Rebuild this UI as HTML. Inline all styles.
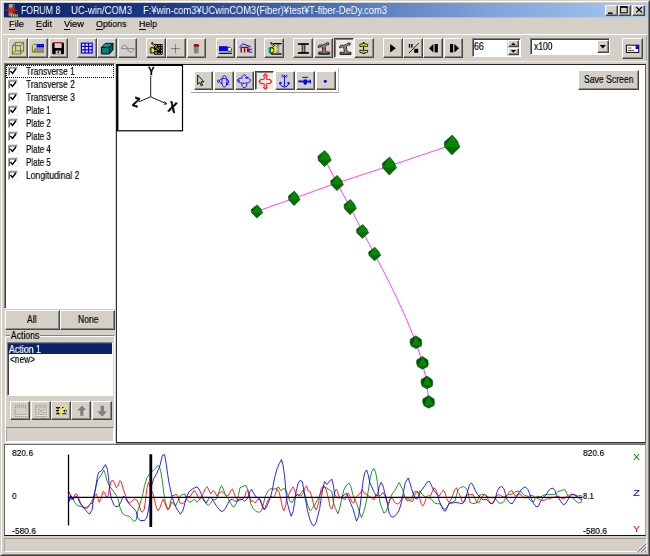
<!DOCTYPE html>
<html>
<head>
<meta charset="utf-8">
<title>FORUM 8 UC-win/COM3</title>
<style>
html,body{margin:0;padding:0;}
body{width:650px;height:556px;overflow:hidden;background:#d4d0c8;position:relative;
 font-family:"Liberation Sans","Noto Sans CJK JP",sans-serif;font-size:10px;color:#000;}
.a{position:absolute;box-sizing:border-box;}
.t{position:absolute;white-space:nowrap;transform-origin:0 0;line-height:1;will-change:transform;-webkit-text-stroke:0.18px currentColor;}
.btn{position:absolute;box-sizing:border-box;background:#d4d0c8;
 border:1px solid;border-color:#fff #484848 #484848 #fff;
 box-shadow:inset -1px -1px 0 #8c8a86;}
.btnp{position:absolute;box-sizing:border-box;
 border:1px solid;border-color:#404040 #fff #fff #404040;
 box-shadow:inset 1px 1px 0 #808080;background:#ebe9e5 repeating-conic-gradient(#fbfbfa 0 25%,#dcd9d2 0 50%) 0 0/1.63px 1.63px;}
.sunk{position:absolute;box-sizing:border-box;background:#fff;
 border:1px solid;border-color:#808080 #fff #fff #808080;
 box-shadow:inset 1px 1px 0 #404040;}
.sunk1{position:absolute;box-sizing:border-box;
 border:1px solid;border-color:#808080 #fff #fff #808080;}
#title{left:4px;top:3px;width:643px;height:14.4px;
 background:linear-gradient(to right,#0a246a 0%,#1c3a86 25%,#4b6fb4 50%,#7da2d8 75%,#a6caf0 100%);}
u{text-decoration:none;border-bottom:1px solid currentColor;}
#ov{position:absolute;left:0;top:0;width:650px;height:556px;pointer-events:none;}
</style>
</head>
<body>
<!-- window frame -->
<div class="a" style="left:0;top:0;width:650px;height:556px;border:1px solid;border-color:#d4d0c8 #404040 #404040 #d4d0c8;"></div>
<div class="a" style="left:1px;top:1px;width:648px;height:554px;border:1px solid;border-color:#fff #808080 #808080 #fff;"></div>

<!-- title bar -->
<div id="title" class="a"></div>
<div class="a" style="left:4px;top:17px;width:643px;height:1px;opacity:.4;background:linear-gradient(to right,#0a246a 0%,#1c3a86 25%,#4b6fb4 50%,#7da2d8 75%,#a6caf0 100%);"></div>
<div class="btn" style="left:605px;top:4.5px;width:12.5px;height:11px;"></div>
<div class="btn" style="left:617.6px;top:4.5px;width:13px;height:11px;"></div>
<div class="btn" style="left:632.4px;top:4.5px;width:13px;height:11px;"></div>

<!-- toolbar lines -->
<div class="a" style="left:3px;top:34px;width:644px;height:1px;background:#fff;"></div>
<div class="a" style="left:646px;top:35px;width:1px;height:27px;background:#a8a59d;"></div>
<div class="a" style="left:3px;top:61.4px;width:644px;height:1px;background:#f0eeea;"></div>

<!-- spin edit -->
<div class="sunk" style="left:471.8px;top:38px;width:49px;height:19.4px;"></div>
<div class="a" style="left:507px;top:40px;width:12px;height:16px;background:#d4d0c8;"></div>
<div class="btn" style="left:507.5px;top:40px;width:11.4px;height:7.4px;"></div>
<div class="btn" style="left:507.5px;top:47.6px;width:11.4px;height:7.8px;"></div>
<!-- combo -->
<div class="sunk" style="left:530px;top:38px;width:80px;height:17px;"></div>
<div class="btn" style="left:597px;top:40px;width:11.6px;height:13px;"></div>

<!-- left panel -->
<div class="sunk" style="left:4.2px;top:63.2px;width:111px;height:245.4px;"></div>
<div class="a" style="left:6.2px;top:65px;width:107.6px;height:12.6px;border:1px dotted #000;"></div>
<div class="btn" style="left:5px;top:310.2px;width:54.6px;height:19.6px;"></div>
<div class="btn" style="left:60.4px;top:310.2px;width:54.4px;height:19.6px;"></div>
<!-- groupbox -->
<div class="a" style="left:5px;top:335px;width:110px;height:108px;border:1px solid;border-color:#808080 #fff #fff #fff;"></div>
<div class="a" style="left:6px;top:336px;width:108px;height:106px;border:1px solid;border-color:#fff #d4d0c8 #d4d0c8 #d4d0c8;"></div>
<div class="sunk" style="left:6.6px;top:342.4px;width:106.2px;height:53.4px;"></div>
<div class="a" style="left:8.4px;top:344.4px;width:103.4px;height:9.4px;background:#0a246a;"></div>
<div class="sunk1" style="left:6px;top:427.4px;width:108px;height:14.6px;border-left-color:#a0a0a0;"></div>

<!-- 3D view -->
<div class="a" style="left:116px;top:64px;width:530px;height:379px;background:#fff;border:1px solid;border-color:#202020 #606060 #303030 #303030;"></div>

<!-- wave panel -->
<div class="a" style="left:3.6px;top:444px;width:642.8px;height:92px;background:#fff;border:1px solid;border-color:#6c6c6c #a0a0a0 #101010 #6c6c6c;"></div>
<div class="a" style="left:116px;top:443px;width:530px;height:1px;background:#8a8a8a;"></div>

<!-- status bar -->
<div class="sunk1" style="left:4px;top:538px;width:643px;height:14px;border-color:#9a9890 #fff #fff #a8a6a0;"></div>

<div class="btn" style="left:8px;top:38px;width:19.8px;height:19.8px;"></div>
<div class="btn" style="left:28.3px;top:38px;width:19.8px;height:19.8px;"></div>
<div class="btn" style="left:48.6px;top:38px;width:19.8px;height:19.8px;"></div>
<div class="btn" style="left:77.1px;top:38px;width:19.8px;height:19.8px;"></div>
<div class="btn" style="left:97.3px;top:38px;width:19.8px;height:19.8px;"></div>
<div class="btn" style="left:117.6px;top:38px;width:19.8px;height:19.8px;"></div>
<div class="btn" style="left:146.1px;top:38px;width:19.8px;height:19.8px;"></div>
<div class="btn" style="left:166.4px;top:38px;width:19.8px;height:19.8px;"></div>
<div class="btn" style="left:186.7px;top:38px;width:19.8px;height:19.8px;"></div>
<div class="btn" style="left:215.5px;top:38px;width:19.8px;height:19.8px;"></div>
<div class="btn" style="left:235.8px;top:38px;width:19.8px;height:19.8px;"></div>
<div class="btn" style="left:264.2px;top:38px;width:19.8px;height:19.8px;"></div>
<div class="btn" style="left:293.2px;top:38px;width:19.8px;height:19.8px;"></div>
<div class="btn" style="left:313.5px;top:38px;width:19.8px;height:19.8px;"></div>
<div class="btnp" style="left:333.9px;top:38px;width:19.8px;height:19.8px;"></div>
<div class="btn" style="left:354.4px;top:38px;width:19.8px;height:19.8px;"></div>
<div class="btn" style="left:382.8px;top:38px;width:19.8px;height:19.8px;"></div>
<div class="btn" style="left:403.1px;top:38px;width:19.8px;height:19.8px;"></div>
<div class="btn" style="left:423.3px;top:38px;width:19.8px;height:19.8px;"></div>
<div class="btn" style="left:443.6px;top:38px;width:19.8px;height:19.8px;"></div>
<div class="btn" style="left:622.3px;top:38px;width:20.4px;height:21px;"></div>
<div class="a" style="left:191px;top:68px;width:148px;height:25px;background:#fff;border-right:1px solid #c0c0c0;border-bottom:1px solid #a0a0a0;"></div>
<div class="btn" style="left:193.8px;top:70.8px;width:19.6px;height:19.4px;"></div>
<div class="btn" style="left:214.4px;top:70.8px;width:19.6px;height:19.4px;"></div>
<div class="btn" style="left:234.6px;top:70.8px;width:19.6px;height:19.4px;"></div>
<div class="btnp" style="left:254.6px;top:70.8px;width:19.6px;height:19.4px;"></div>
<div class="btn" style="left:275.4px;top:70.8px;width:19.6px;height:19.4px;"></div>
<div class="btn" style="left:295.6px;top:70.8px;width:19.6px;height:19.4px;"></div>
<div class="btn" style="left:316px;top:70.8px;width:19.6px;height:19.4px;"></div>
<div class="btn" style="left:578.3px;top:70px;width:60.8px;height:19.8px;"></div>
<div class="btn" style="left:10px;top:401px;width:19.8px;height:19px;"></div>
<div class="btn" style="left:31px;top:401px;width:19.8px;height:19px;"></div>
<div class="btn" style="left:51.3px;top:401px;width:19.8px;height:19px;"></div>
<div class="btn" style="left:71.3px;top:401px;width:19.8px;height:19px;"></div>
<div class="btn" style="left:92.1px;top:401px;width:19.8px;height:19px;"></div>
<div class="t" style="left:20.8px;top:6.0px;font-size:10px;color:#fff;transform:scaleX(0.873);-webkit-text-stroke:0;">FORUM 8</div>
<div class="t" style="left:70.8px;top:6.0px;font-size:10px;color:#fff;transform:scaleX(0.946);-webkit-text-stroke:0;">UC-win/COM3</div>
<div class="t" style="left:142.5px;top:6.0px;font-size:10px;color:#fff;transform:scaleX(0.935);-webkit-text-stroke:0;">F:¥win-com3¥UCwinCOM3(Fiber)¥test¥T-fiber-DeDy.com3</div>
<div class="t" style="left:9.3px;top:20.0px;font-size:9px;color:#000;transform:scaleX(1.033);"><u>F</u>ile</div>
<div class="t" style="left:36.3px;top:20.0px;font-size:9px;color:#000;transform:scaleX(1.030);"><u>E</u>dit</div>
<div class="t" style="left:64.0px;top:20.0px;font-size:9px;color:#000;transform:scaleX(1.033);"><u>V</u>iew</div>
<div class="t" style="left:96.0px;top:20.0px;font-size:9px;color:#000;transform:scaleX(0.982);"><u>O</u>ptions</div>
<div class="t" style="left:139.3px;top:20.0px;font-size:9px;color:#000;transform:scaleX(0.972);"><u>H</u>elp</div>
<div class="t" style="left:25.6px;top:67.0px;font-size:10px;color:#000;transform:scaleX(0.842);">Transverse 1</div>
<div class="t" style="left:25.6px;top:80.0px;font-size:10px;color:#000;transform:scaleX(0.842);">Transverse 2</div>
<div class="t" style="left:25.6px;top:93.0px;font-size:10px;color:#000;transform:scaleX(0.842);">Transverse 3</div>
<div class="t" style="left:25.6px;top:106.0px;font-size:10px;color:#000;transform:scaleX(0.796);">Plate 1</div>
<div class="t" style="left:25.6px;top:119.0px;font-size:10px;color:#000;transform:scaleX(0.796);">Plate 2</div>
<div class="t" style="left:25.6px;top:132.0px;font-size:10px;color:#000;transform:scaleX(0.796);">Plate 3</div>
<div class="t" style="left:25.6px;top:145.0px;font-size:10px;color:#000;transform:scaleX(0.796);">Plate 4</div>
<div class="t" style="left:25.6px;top:158.0px;font-size:10px;color:#000;transform:scaleX(0.796);">Plate 5</div>
<div class="t" style="left:25.6px;top:171.0px;font-size:10px;color:#000;transform:scaleX(0.857);">Longitudinal 2</div>
<div class="t" style="left:27.0px;top:315.0px;font-size:10px;color:#000;transform:scaleX(0.854);">All</div>
<div class="t" style="left:77.6px;top:315.0px;font-size:10px;color:#000;transform:scaleX(0.858);">None</div>
<div class="t" style="left:11.0px;top:331.0px;font-size:10px;color:#000;transform:scaleX(0.869);background:#d4d0c8;padding:0 1px;margin-left:-1px;">Actions</div>
<div class="t" style="left:9.0px;top:345.0px;font-size:10px;color:#fff;transform:scaleX(0.885);">Action 1</div>
<div class="t" style="left:10.0px;top:355.0px;font-size:10px;color:#000;transform:scaleX(0.832);">&lt;new&gt;</div>
<div class="t" style="left:583.5px;top:75.0px;font-size:10px;color:#000;transform:scaleX(0.864);">Save Screen</div>
<div class="t" style="left:474.3px;top:42.0px;font-size:10px;color:#000;transform:scaleX(0.881);">66</div>
<div class="t" style="left:533.8px;top:42.0px;font-size:10px;color:#000;transform:scaleX(0.853);">x100</div>
<div class="t" style="left:12.0px;top:448.0px;font-size:9.5px;color:#000;transform:scaleX(0.891);">820.6</div>
<div class="t" style="left:12.0px;top:491.0px;font-size:9.5px;color:#000;transform:scaleX(0.868);">0</div>
<div class="t" style="left:12.0px;top:526.0px;font-size:9.5px;color:#000;transform:scaleX(0.891);">-580.6</div>
<div class="t" style="left:582.7px;top:448.0px;font-size:9.5px;color:#000;transform:scaleX(0.891);">820.6</div>
<div class="t" style="left:583.0px;top:491.0px;font-size:9.5px;color:#000;transform:scaleX(0.817);">8.1</div>
<div class="t" style="left:583.0px;top:526.0px;font-size:9.5px;color:#000;transform:scaleX(0.891);">-580.6</div>
<div class="t" style="left:632.5px;top:452.0px;font-size:9.5px;color:#008000;transform:scaleX(1.103);-webkit-text-stroke:0;">X</div>
<div class="t" style="left:632.5px;top:488.0px;font-size:9.5px;color:#0000ff;transform:scaleX(1.204);-webkit-text-stroke:0;">Z</div>
<div class="t" style="left:632.5px;top:524.0px;font-size:9.5px;color:#ff0000;transform:scaleX(1.103);-webkit-text-stroke:0;">Y</div>
<svg id="ov" viewBox="0 0 650 556" width="650" height="556">
<g id="waves">
<line x1="68.5" y1="454.5" x2="68.5" y2="525.5" stroke="#000" stroke-width="1.3"/>
<polyline fill="none" stroke="#008000" stroke-width="0.85" stroke-linejoin="round" points="68.5,497.7 70.8,499.2 73.1,498.5 74.6,502.3 77.7,505.7 81.5,506.6 85.4,507.7 88.5,506.2 90.8,503.1 93.1,498.5 95.4,488.5 97.7,480.0 100.0,476.9 103.8,470.0 105.4,474.6 106.9,480.8 109.2,485.4 113.1,490.8 116.9,496.2 118.5,500.8 120.0,507.7 122.3,513.1 125.4,515.4 129.2,516.2 131.5,518.5 133.8,521.5 136.2,520.0 137.7,511.5 140.0,503.8 142.3,496.2 144.6,485.4 146.9,477.7 149.2,474.6 151.5,472.3 154.6,469.2 157.7,465.4 159.2,466.2 160.8,471.5 162.3,480.8 163.8,493.1 165.4,502.3 166.9,506.9 168.5,509.2 170.0,506.9 171.5,502.3 173.1,503.1 175.4,506.2 177.7,501.5 180.0,496.2 182.3,494.6 184.6,493.8 186.9,499.2 189.7,502.3 192.3,500.8 194.6,499.2 196.9,502.3 199.2,500.0 201.5,496.2 203.8,499.2 206.2,503.8 208.5,505.4 210.8,503.1 213.1,499.2 215.4,500.0 217.7,496.2 220.0,488.5 221.5,485.7 223.1,488.5 225.4,495.4 227.7,497.7 230.0,502.3 232.3,506.2 234.6,506.6 236.9,502.3 238.5,494.6 240.0,487.7 243.1,486.2 245.8,485.4 247.7,489.2 249.2,496.2 250.8,503.8 253.1,508.5 256.2,511.5 259.2,512.3 261.5,510.8 263.4,503.8 265.4,496.2 267.7,491.5 270.8,488.5 273.8,489.2 276.2,488.5 278.5,486.9 280.8,490.8 283.1,488.5 285.4,489.2 287.7,494.6 290.0,501.5 292.3,502.3 294.6,497.7 296.9,494.6 299.2,495.4 301.5,492.3 303.4,490.0 305.4,496.2 307.7,505.4 310.0,510.8 312.3,508.5 314.6,505.4 316.9,500.8 319.2,496.2 321.5,491.5 323.8,486.9 326.2,487.7 328.5,489.2 330.0,490.0 331.8,491.5 333.4,502.3 335.4,508.5 338.0,513.8 340.0,506.9 342.0,497.7 343.8,490.0 346.2,485.4 348.8,483.1 350.8,486.2 352.8,494.6 354.6,499.2 356.9,503.8 359.2,511.5 361.5,517.7 363.8,511.5 366.2,502.3 368.2,491.5 370.0,479.2 371.8,471.5 373.8,468.2 375.8,473.1 377.4,482.3 378.5,493.1 380.0,502.3 382.0,508.5 383.8,513.1 386.2,511.5 388.2,505.4 390.3,497.7 392.3,493.8 394.6,490.8 396.9,486.9 399.2,482.6 401.1,486.2 403.1,490.8 404.6,496.2 406.9,500.8 409.2,500.8 411.5,499.2 413.8,492.3 416.2,491.2 418.5,493.1 420.0,490.8 422.3,494.6 425.4,496.9 428.5,497.7 431.5,499.2 434.6,503.1 437.7,503.8 440.0,503.8 442.3,506.9 444.6,509.2 446.9,507.7 449.2,503.1 452.3,502.3 455.1,500.8 456.6,494.6 458.5,489.2 460.8,487.2 463.8,486.6 466.2,488.5 468.0,492.3 468.9,497.7 470.0,502.3 473.1,503.5 476.2,503.1 478.2,499.2 479.2,495.4 481.5,494.6 484.6,494.3 486.9,496.2 489.2,497.7 492.3,497.7 495.4,498.0 496.9,500.8 499.2,503.1 502.3,503.1 504.6,500.8 505.8,496.2 507.7,494.6 509.2,494.9 510.0,494.6 513.1,493.8 515.4,491.5 518.5,491.2 521.5,492.3 524.6,495.4 527.7,496.2 529.2,499.2 531.5,501.5 533.8,501.5 535.4,497.7 537.7,496.2 540.8,496.9 543.1,495.4 546.2,494.6 550.0,494.6 553.8,494.6 556.2,493.8 558.0,491.5 560.8,490.8 563.1,489.7 565.1,490.0 566.6,493.1 568.2,496.2 570.8,497.4 573.1,498.0 575.4,500.8 578.5,503.1 581.1,502.3 582.0,499.2"/>
<polyline fill="none" stroke="#ff0000" stroke-width="0.85" stroke-linejoin="round" points="68.5,496.2 69.5,492.3 70.8,496.2 72.0,500.0 73.8,497.7 75.4,493.8 77.2,494.6 78.5,497.7 80.8,503.8 83.8,507.7 86.9,508.5 89.2,505.4 90.8,503.1 92.3,503.8 94.6,496.2 96.2,493.8 97.7,497.7 99.2,502.3 100.8,499.2 103.1,491.5 104.6,492.3 106.2,496.9 108.0,496.2 109.5,486.9 111.5,480.8 113.1,480.5 114.6,483.1 116.2,487.7 118.2,485.4 119.7,480.8 121.2,481.5 122.8,487.7 124.6,493.1 126.9,499.2 128.9,503.1 131.5,501.5 134.6,498.9 136.9,500.0 138.8,503.8 140.8,510.8 142.3,512.3 144.3,509.2 145.4,500.8 146.9,488.5 148.5,482.3 151.5,490.8 153.1,493.8 154.6,500.8 156.2,506.9 158.0,510.8 160.0,507.7 161.5,503.1 163.1,499.2 164.6,502.3 166.2,506.9 167.7,510.0 169.2,507.7 170.8,500.8 172.3,495.4 174.6,495.4 176.2,493.8 178.5,497.7 180.0,503.1 183.1,503.5 185.4,500.8 187.7,496.2 190.0,496.9 192.3,493.1 194.3,490.3 196.2,493.1 198.5,497.7 200.8,498.5 203.1,493.8 205.4,488.5 207.2,486.6 209.2,490.8 210.8,493.8 213.1,490.8 214.6,491.5 216.9,496.2 219.2,493.1 221.5,491.5 223.8,493.1 226.2,495.4 228.5,495.4 230.8,490.8 232.3,488.8 233.8,492.3 235.4,496.9 237.7,500.0 239.2,499.2 240.0,498.9 242.3,499.2 244.6,497.7 246.2,491.5 247.7,490.0 249.2,494.6 250.8,501.5 253.1,500.8 255.4,503.1 257.7,499.2 260.0,500.0 261.5,503.8 263.1,508.5 264.6,509.2 266.2,504.6 268.5,499.2 270.8,496.2 273.1,497.7 275.4,494.6 276.9,488.5 279.2,492.3 280.8,499.2 282.3,506.9 283.8,510.8 285.4,506.9 286.9,497.7 288.5,495.4 290.8,490.0 293.1,486.9 294.6,490.0 296.2,495.4 298.2,494.6 300.8,496.2 303.1,493.1 304.6,488.5 306.5,485.7 308.0,490.8 310.0,491.5 312.0,497.7 313.8,505.4 316.2,510.0 318.2,504.6 319.7,496.2 321.2,488.5 323.1,486.2 324.6,486.2 326.2,490.0 328.0,496.9 329.2,502.3 330.0,506.9 331.8,509.2 333.4,503.8 334.3,493.1 336.2,489.2 337.7,491.5 338.5,496.2 340.8,497.7 343.1,498.5 345.1,500.0 346.6,495.4 348.2,493.1 350.0,496.2 351.5,501.5 353.8,503.1 355.4,497.7 357.7,495.4 360.0,493.8 362.3,489.7 364.6,493.8 366.9,494.6 369.2,496.2 371.5,497.7 373.8,500.0 376.2,494.6 378.5,496.2 380.8,495.4 383.1,492.3 385.1,496.2 386.9,501.5 388.5,503.8 390.3,499.2 392.3,497.7 394.6,502.3 397.7,504.2 400.0,502.3 402.0,497.7 403.8,495.4 406.2,499.2 408.5,498.5 410.8,501.5 413.1,500.8 415.4,493.1 417.4,491.5 419.2,496.2 420.0,499.2 421.2,503.8 422.8,506.2 424.6,503.1 426.5,496.9 428.5,495.4 430.5,496.2 432.3,491.5 434.2,487.7 436.2,490.8 437.7,494.6 439.2,496.2 441.5,492.3 443.4,490.0 445.4,493.8 446.9,499.2 448.9,502.3 450.8,500.0 452.6,495.4 454.6,490.0 456.6,487.7 457.7,492.3 459.2,493.8 460.8,497.7 462.3,502.3 464.6,500.8 466.2,495.4 469.2,494.6 473.1,494.6 474.6,497.7 476.2,501.5 478.5,503.1 480.3,500.0 482.3,496.2 484.6,494.6 486.5,496.2 488.5,500.0 490.5,503.1 492.3,503.8 494.2,500.8 496.2,496.2 498.5,494.6 500.8,495.4 503.1,496.9 505.4,496.9 507.7,494.6 509.5,491.5 510.0,491.5 511.8,490.3 513.4,493.1 515.4,496.2 517.7,494.6 520.0,493.8 522.3,496.2 524.6,498.0 527.7,497.7 530.0,495.4 532.3,495.4 534.6,496.9 537.7,498.5 540.8,500.0 543.1,500.8 546.2,499.2 549.2,498.5 552.3,497.7 555.4,496.9 558.5,496.2 561.5,498.5 563.8,498.9 566.2,496.9 568.5,495.4 570.8,494.3 573.1,494.6 575.4,495.8 578.5,495.8 580.8,495.4 582.0,496.2"/>
<polyline fill="none" stroke="#0000ff" stroke-width="0.85" stroke-linejoin="round" points="68.5,497.7 69.2,501.5 70.8,495.4 73.1,499.2 76.2,496.2 77.7,497.7 80.0,503.1 84.6,509.2 89.5,514.3 92.3,509.2 93.1,500.8 95.4,490.0 96.9,479.2 98.5,472.3 101.5,470.8 105.4,464.6 107.4,469.2 108.5,477.7 110.0,491.5 111.5,499.2 113.8,504.6 115.7,506.6 118.5,506.2 120.8,502.3 123.1,496.2 125.4,497.7 127.7,502.3 132.3,506.9 136.2,511.5 137.7,517.7 140.0,520.5 144.6,520.5 146.9,516.9 148.5,510.0 151.5,486.2 153.8,478.5 156.9,473.1 160.0,465.4 162.3,455.4 164.6,454.6 166.2,463.8 167.7,474.6 169.2,483.8 171.5,494.6 173.8,502.3 176.9,509.2 180.5,514.3 183.1,510.0 185.1,502.3 186.9,496.2 189.2,491.5 193.1,488.5 196.9,486.9 199.2,489.2 201.5,494.6 203.8,500.8 206.2,503.1 208.5,499.2 210.3,496.9 212.3,499.2 214.6,503.1 217.7,507.7 220.8,511.2 223.1,511.2 225.4,508.5 227.7,503.8 230.0,500.0 232.3,499.2 234.6,500.8 236.9,501.5 239.2,500.0 240.0,500.0 242.3,499.2 244.6,501.5 246.9,499.2 248.5,496.2 250.0,491.5 251.5,489.2 253.5,493.1 255.4,496.2 257.7,497.7 260.0,499.2 262.3,505.4 264.3,510.0 266.2,507.7 268.5,502.3 270.8,496.2 272.6,488.5 274.6,477.7 276.9,469.2 279.2,463.8 281.5,459.5 283.1,465.4 284.6,476.2 285.8,490.0 286.9,500.8 288.9,509.2 291.1,516.2 293.1,511.5 294.6,502.3 296.2,491.5 298.2,483.1 300.0,480.5 302.3,481.5 303.8,490.0 305.4,499.2 307.7,511.5 310.0,520.0 312.3,524.6 313.8,526.2 316.2,522.3 317.7,516.2 319.7,508.5 321.5,496.2 323.1,486.9 324.6,481.5 326.9,484.6 329.2,481.5 330.0,480.8 331.8,479.2 333.4,485.4 334.6,494.6 336.9,497.7 340.0,498.0 342.3,496.2 344.6,494.6 346.6,493.1 348.5,497.7 350.8,503.8 353.1,509.2 354.6,514.6 356.5,521.1 358.5,516.9 360.0,506.9 361.5,494.6 363.1,480.8 364.6,473.1 366.6,470.0 368.2,474.6 369.7,482.3 371.5,486.2 373.8,491.5 376.2,496.2 377.7,494.6 379.2,486.9 381.1,482.3 383.1,486.2 384.6,492.3 386.2,497.7 387.7,505.4 389.2,513.1 391.5,516.9 393.8,516.9 396.9,513.8 399.2,510.0 401.5,502.3 403.5,491.5 405.4,482.3 408.2,478.0 410.0,483.1 411.5,488.5 413.8,495.4 416.2,499.2 418.5,497.7 420.0,492.3 422.3,489.2 424.6,486.2 426.9,482.3 429.2,481.2 431.1,484.6 433.1,489.2 435.4,492.3 437.7,495.4 439.2,500.8 441.5,506.2 443.8,510.8 445.8,510.8 447.4,506.9 449.2,503.1 452.3,503.1 455.4,502.3 459.2,503.1 462.3,503.8 464.6,501.5 466.2,496.2 468.0,490.0 469.5,484.6 471.5,483.1 473.5,486.2 475.4,490.8 477.7,494.6 480.0,496.9 483.1,500.0 486.2,499.2 488.5,501.5 490.8,503.8 493.1,503.1 495.4,498.5 496.9,492.3 499.2,487.7 501.5,486.5 503.8,488.5 505.4,493.8 506.9,499.2 509.2,502.3 510.0,503.1 512.3,503.8 514.6,500.0 516.9,496.2 519.2,492.3 522.3,488.5 525.4,486.9 527.7,489.2 529.7,493.8 531.5,499.2 533.8,503.8 536.2,506.9 538.5,506.2 540.5,501.5 543.1,497.7 546.2,494.6 548.5,490.8 550.8,488.5 553.1,488.2 554.9,490.3 556.2,494.6 558.5,497.7 560.8,501.5 563.1,504.6 565.4,503.8 567.7,500.0 570.0,496.2 572.3,494.3 574.6,494.6 577.7,496.9 580.0,499.2 582.0,498.9"/>
<line x1="68.5" y1="497.4" x2="582.5" y2="497.4" stroke="#000" stroke-width="1.1"/>
<line x1="150.8" y1="454.3" x2="150.8" y2="527" stroke="#000" stroke-width="2.8"/>
</g>
<g id="model">
<polyline fill="none" stroke="#ff00ff" stroke-width="0.75" points="256.8,211.4 294,198.3 336.9,183 389.3,166 451.9,144.9"/>
<path fill="none" stroke="#ff00ff" stroke-width="0.75" d="M324.4,158.6 L336.9,183 L350,207 L362.4,231.4 L374.5,254 Q399,299 415.9,342.2 L422.4,362.8 L426.9,382.4 L428.6,401.8"/>
<polygon points="257.1,204.9 260.7,208.7 262.7,212.7 256.8,217.9 251.5,212.7 251.2,209.5" fill="#045a04" stroke="#045a04" stroke-width="0.6" stroke-linejoin="round"/><polygon points="257.1,204.9 262.7,212.7 251.5,212.7" fill="#088608"/><polygon points="251.5,212.7 262.7,212.7 256.8,217.9" fill="#056c05"/>
<polygon points="294.3,191.1 297.9,195.3 299.9,199.7 294.0,205.5 288.7,199.7 288.4,196.1" fill="#045a04" stroke="#045a04" stroke-width="0.6" stroke-linejoin="round"/><polygon points="294.3,191.1 299.9,199.7 288.7,199.7" fill="#088608"/><polygon points="288.7,199.7 299.9,199.7 294.0,205.5" fill="#056c05"/>
<polygon points="337.2,175.4 341.2,179.8 343.4,184.5 336.9,190.6 331.0,184.5 330.7,180.7" fill="#045a04" stroke="#045a04" stroke-width="0.6" stroke-linejoin="round"/><polygon points="337.2,175.4 343.4,184.5 331.0,184.5" fill="#088608"/><polygon points="331.0,184.5 343.4,184.5 336.9,190.6" fill="#056c05"/>
<polygon points="389.6,157.0 394.1,162.2 396.5,167.8 389.3,175.0 382.7,167.8 382.4,163.3" fill="#045a04" stroke="#045a04" stroke-width="0.6" stroke-linejoin="round"/><polygon points="389.6,157.0 396.5,167.8 382.7,167.8" fill="#088608"/><polygon points="382.7,167.8 396.5,167.8 389.3,175.0" fill="#056c05"/>
<polygon points="452.3,135.0 457.2,140.7 459.9,146.9 451.9,154.8 444.7,146.9 444.3,141.9" fill="#045a04" stroke="#045a04" stroke-width="0.6" stroke-linejoin="round"/><polygon points="452.3,135.0 459.9,146.9 444.7,146.9" fill="#088608"/><polygon points="444.7,146.9 459.9,146.9 451.9,154.8" fill="#056c05"/>
<polygon points="324.7,150.6 328.9,155.2 331.2,160.2 324.4,166.6 318.2,160.2 317.9,156.2" fill="#045a04" stroke="#045a04" stroke-width="0.6" stroke-linejoin="round"/><polygon points="324.7,150.6 331.2,160.2 318.2,160.2" fill="#088608"/><polygon points="318.2,160.2 331.2,160.2 324.4,166.6" fill="#056c05"/>
<polygon points="350.3,199.4 354.2,203.8 356.3,208.5 350.0,214.6 344.3,208.5 344.0,204.7" fill="#045a04" stroke="#045a04" stroke-width="0.6" stroke-linejoin="round"/><polygon points="350.3,199.4 356.3,208.5 344.3,208.5" fill="#088608"/><polygon points="344.3,208.5 356.3,208.5 350.0,214.6" fill="#056c05"/>
<polygon points="362.7,224.5 366.5,228.5 368.6,232.8 362.4,238.3 356.8,232.8 356.5,229.3" fill="#045a04" stroke="#045a04" stroke-width="0.6" stroke-linejoin="round"/><polygon points="362.7,224.5 368.6,232.8 356.8,232.8" fill="#088608"/><polygon points="356.8,232.8 368.6,232.8 362.4,238.3" fill="#056c05"/>
<polygon points="374.8,247.3 378.6,251.2 380.7,255.3 374.5,260.7 368.9,255.3 368.6,252.0" fill="#045a04" stroke="#045a04" stroke-width="0.6" stroke-linejoin="round"/><polygon points="374.8,247.3 380.7,255.3 368.9,255.3" fill="#088608"/><polygon points="368.9,255.3 380.7,255.3 374.5,260.7" fill="#056c05"/>
<polygon points="415.9,335.8 421.3,339.5 421.8,343.5 421.2,346.0 415.9,348.6 411.2,346.0 410.0,342.5 410.3,339.3" fill="#045404" stroke="#045404" stroke-width="0.6" stroke-linejoin="round"/><polygon points="415.9,336.1 421.1,345.4 411.7,345.4" fill="#088608"/><polygon points="411.7,345.4 421.1,345.4 415.9,348.5" fill="#056c05"/>
<polygon points="422.4,356.4 427.8,360.1 428.3,364.1 427.7,366.6 422.4,369.2 417.7,366.6 416.5,363.1 416.8,359.9" fill="#045404" stroke="#045404" stroke-width="0.6" stroke-linejoin="round"/><polygon points="422.4,356.7 427.6,366.0 418.2,366.0" fill="#088608"/><polygon points="418.2,366.0 427.6,366.0 422.4,369.1" fill="#056c05"/>
<polygon points="426.9,376.0 432.3,379.7 432.8,383.7 432.2,386.2 426.9,388.8 422.2,386.2 421.0,382.7 421.3,379.5" fill="#045404" stroke="#045404" stroke-width="0.6" stroke-linejoin="round"/><polygon points="426.9,376.3 432.1,385.6 422.7,385.6" fill="#088608"/><polygon points="422.7,385.6 432.1,385.6 426.9,388.7" fill="#056c05"/>
<polygon points="428.6,395.4 434.0,399.1 434.5,403.1 433.9,405.6 428.6,408.2 423.9,405.6 422.7,402.1 423.0,398.9" fill="#045404" stroke="#045404" stroke-width="0.6" stroke-linejoin="round"/><polygon points="428.6,395.7 433.8,405.0 424.4,405.0" fill="#088608"/><polygon points="424.4,405.0 433.8,405.0 428.6,408.1" fill="#056c05"/>
</g>
<g id="axis">
<rect x="117.2" y="65" width="65.3" height="65.8" fill="#fff" stroke="#000" stroke-width="1.2"/>
<line x1="117.6" y1="64" x2="117.6" y2="131" stroke="#000" stroke-width="1.6"/>
<line x1="117" y1="65.2" x2="183" y2="65.2" stroke="#000" stroke-width="1.8"/>
<path d="M150.7,96.8 L150.7,76 M150.7,96.8 L166.5,103.8 M150.7,96.8 L139,101.8" stroke="#000" stroke-width="0.9" fill="none"/>
<path d="M164.3,101.2 L166.8,104 L163.6,104.4" stroke="#000" stroke-width="0.7" fill="none"/>
<g font-family="Liberation Sans, sans-serif" font-weight="bold" font-size="11.5" fill="#000" stroke="#000" stroke-width="0.45" text-anchor="middle">
<text x="151.4" y="75" transform="translate(151.4 0) scale(0.8 1) translate(-151.4 0)">Y</text>
<text transform="translate(172.6 107) rotate(16) scale(1.0 1.3)" x="0" y="4.1">X</text>
<text transform="translate(136.300 102) rotate(20) scale(0.85 1.2)" x="0" y="4.1">Z</text>
</g>
</g>
<g id="checks">
<rect x="8.2" y="66.8" width="9.6" height="9" fill="#fff"/>
<path d="M8.6,75.8V67.2H17.8" fill="none" stroke="#909090" stroke-width="0.9"/>
<path d="M9.5,75.0V68.1H17" fill="none" stroke="#606060" stroke-width="0.9"/>
<path d="M9,75.8H17.9V67.3" fill="none" stroke="#e8e6e0" stroke-width="0.8"/>
<path d="M10.4,71.0L12.5,73.4L16,68.8" fill="none" stroke="#000" stroke-width="1.5"/>
<rect x="8.2" y="79.8" width="9.6" height="9" fill="#fff"/>
<path d="M8.6,88.8V80.2H17.8" fill="none" stroke="#909090" stroke-width="0.9"/>
<path d="M9.5,88.0V81.1H17" fill="none" stroke="#606060" stroke-width="0.9"/>
<path d="M9,88.8H17.9V80.3" fill="none" stroke="#e8e6e0" stroke-width="0.8"/>
<path d="M10.4,84.0L12.5,86.4L16,81.8" fill="none" stroke="#000" stroke-width="1.5"/>
<rect x="8.2" y="92.8" width="9.6" height="9" fill="#fff"/>
<path d="M8.6,101.8V93.2H17.8" fill="none" stroke="#909090" stroke-width="0.9"/>
<path d="M9.5,101.0V94.1H17" fill="none" stroke="#606060" stroke-width="0.9"/>
<path d="M9,101.8H17.9V93.3" fill="none" stroke="#e8e6e0" stroke-width="0.8"/>
<path d="M10.4,97.0L12.5,99.4L16,94.8" fill="none" stroke="#000" stroke-width="1.5"/>
<rect x="8.2" y="105.8" width="9.6" height="9" fill="#fff"/>
<path d="M8.6,114.8V106.2H17.8" fill="none" stroke="#909090" stroke-width="0.9"/>
<path d="M9.5,114.0V107.1H17" fill="none" stroke="#606060" stroke-width="0.9"/>
<path d="M9,114.8H17.9V106.3" fill="none" stroke="#e8e6e0" stroke-width="0.8"/>
<path d="M10.4,110.0L12.5,112.4L16,107.8" fill="none" stroke="#000" stroke-width="1.5"/>
<rect x="8.2" y="118.8" width="9.6" height="9" fill="#fff"/>
<path d="M8.6,127.8V119.2H17.8" fill="none" stroke="#909090" stroke-width="0.9"/>
<path d="M9.5,127.0V120.1H17" fill="none" stroke="#606060" stroke-width="0.9"/>
<path d="M9,127.8H17.9V119.3" fill="none" stroke="#e8e6e0" stroke-width="0.8"/>
<path d="M10.4,123.0L12.5,125.4L16,120.8" fill="none" stroke="#000" stroke-width="1.5"/>
<rect x="8.2" y="131.8" width="9.6" height="9" fill="#fff"/>
<path d="M8.6,140.8V132.2H17.8" fill="none" stroke="#909090" stroke-width="0.9"/>
<path d="M9.5,140.0V133.1H17" fill="none" stroke="#606060" stroke-width="0.9"/>
<path d="M9,140.8H17.9V132.3" fill="none" stroke="#e8e6e0" stroke-width="0.8"/>
<path d="M10.4,136.0L12.5,138.4L16,133.8" fill="none" stroke="#000" stroke-width="1.5"/>
<rect x="8.2" y="144.8" width="9.6" height="9" fill="#fff"/>
<path d="M8.6,153.8V145.2H17.8" fill="none" stroke="#909090" stroke-width="0.9"/>
<path d="M9.5,153.0V146.1H17" fill="none" stroke="#606060" stroke-width="0.9"/>
<path d="M9,153.8H17.9V145.3" fill="none" stroke="#e8e6e0" stroke-width="0.8"/>
<path d="M10.4,149.0L12.5,151.4L16,146.8" fill="none" stroke="#000" stroke-width="1.5"/>
<rect x="8.2" y="157.8" width="9.6" height="9" fill="#fff"/>
<path d="M8.6,166.8V158.2H17.8" fill="none" stroke="#909090" stroke-width="0.9"/>
<path d="M9.5,166.0V159.1H17" fill="none" stroke="#606060" stroke-width="0.9"/>
<path d="M9,166.8H17.9V158.3" fill="none" stroke="#e8e6e0" stroke-width="0.8"/>
<path d="M10.4,162.0L12.5,164.4L16,159.8" fill="none" stroke="#000" stroke-width="1.5"/>
<rect x="8.2" y="170.8" width="9.6" height="9" fill="#fff"/>
<path d="M8.6,179.8V171.2H17.8" fill="none" stroke="#909090" stroke-width="0.9"/>
<path d="M9.5,179.0V172.1H17" fill="none" stroke="#606060" stroke-width="0.9"/>
<path d="M9,179.8H17.9V171.3" fill="none" stroke="#e8e6e0" stroke-width="0.8"/>
<path d="M10.4,175.0L12.5,177.4L16,172.8" fill="none" stroke="#000" stroke-width="1.5"/>
</g>
<g id="ticon">
<rect x="8.6" y="4.2" width="6" height="11.6" fill="#8a8a8a"/>
<rect x="12.6" y="4.8" width="2.2" height="11" fill="#4a4a4a"/>
<rect x="9.6" y="4.2" width="2.4" height="3" fill="#b8b8b8"/>
<polyline points="5.4,10.6 8,10.2 9.2,8.4 10.2,12.6 11.2,7.6 12,13 13,9 14,11.6 15,10 17.6,10.6" fill="none" stroke="#ff0000" stroke-width="1"/>
<rect x="10.8" y="14.2" width="7" height="2.4" fill="#6a6a20"/>
<path d="M11.4,14.2v2.4M13.4,14.2v2.4M15.4,14.2v2.4M17.2,14.2v2.4" stroke="#e8e800" stroke-width="0.9"/>
</g>
<g id="tbtns" fill="none" stroke="#000">
<path d="M608,13.2h4.6" stroke-width="1.5"/>
<rect x="620.6" y="6.8" width="6.6" height="6" stroke-width="1"/>
<path d="M620.2,7h7.4" stroke-width="1.6"/>
<path d="M636.200,7l5.800,5.600M642,7l-5.800,5.600" stroke-width="1.250"/>
</g>
<g id="tbicons">
<!-- 1 wire cube -->
<g fill="none" stroke="#808000" stroke-width="1">
<rect x="12.4" y="45.6" width="8" height="8.4"/>
<rect x="15.6" y="42.4" width="8" height="8.4"/>
<path d="M12.4,45.6l3.2,-3.2M20.4,45.6l3.2,-3.2M12.4,54l3.2,-3.2M20.4,54l3.2,-3.2"/>
</g>
<!-- 2 open folder -->
<g>
<path d="M32.4,52.2v-6.4l1.4,-1.4h3" fill="none" stroke="#808000" stroke-width="1"/>
<rect x="36.6" y="44" width="7.4" height="3.6" fill="#0000e0"/>
<path d="M37.4,45.2h1.4M40,45.2h1.4M42.2,45.2h1" stroke="#4060ff" stroke-width="0.8"/>
<polygon points="34.8,47.8 44,47.8 44,52 33,52" fill="#909090"/>
<path d="M32.6,52.2h11.4" stroke="#808000" stroke-width="1"/>
</g>
<!-- 3 floppy -->
<g>
<rect x="52.2" y="42.4" width="11.8" height="11.8" rx="1" fill="#000"/>
<rect x="54.6" y="43" width="7" height="5" fill="#d4d0c8"/>
<rect x="54.4" y="42.2" width="7.4" height="1.1" fill="#ff0000"/>
<rect x="55.6" y="50.6" width="5.4" height="3.6" fill="#c0c0c0"/>
<rect x="57.6" y="51.6" width="1.4" height="1.6" fill="#000"/>
</g>
<!-- 4 blue grid -->
<g>
<rect x="81.2" y="43" width="11" height="10.2" fill="#e8e0f0"/>
<g fill="none" stroke="#0000ff" stroke-width="1.2">
<rect x="81.4" y="43.2" width="10.8" height="9.8"/>
<path d="M85,43v10M88.6,43v10M81.4,46.4h10.8M81.4,49.8h10.8"/>
</g>
</g>
<!-- 5 teal cube -->
<g stroke="#000" stroke-width="0.9" stroke-linejoin="round">
<polygon points="101.4,47.4 105.2,43.4 113,43.4 109.4,47.4" fill="#00a0a0"/>
<polygon points="109.4,47.4 113,43.4 113,49.8 109.4,54" fill="#006060"/>
<rect x="101.4" y="47.4" width="8" height="6.6" fill="#008080"/>
</g>
<!-- 6 gray sine -->
<g fill="none" stroke="#808080" stroke-width="0.9">
<path d="M121,48.6h13.4"/>
<path d="M121.4,48.6c1,-4.6 5,-4.6 6.2,0c1.2,4.8 5.4,4.8 6.4,0"/>
</g>
<!-- 7 hand+pencil grid -->
<g>
<rect x="154" y="44" width="8.800" height="10.800" rx="0.800" fill="#000"/>
<g fill="#e8e8e8"><rect x="155.800" y="44.900" width="1.100" height="1.100"/><rect x="158.600" y="44.900" width="1.100" height="1.100"/><rect x="161.100" y="44.900" width="1.100" height="1.100"/>
<rect x="158.600" y="47.300" width="1.100" height="1.100"/><rect x="161.100" y="47.300" width="1.100" height="1.100"/>
<rect x="161.100" y="50.100" width="1.100" height="1.100"/>
<rect x="155.800" y="52.700" width="1.100" height="1.100"/><rect x="158.600" y="52.700" width="1.100" height="1.100"/><rect x="161.100" y="52.700" width="1.100" height="1.100"/></g>
<rect x="148.800" y="47.600" width="1.600" height="5.200" fill="#20e0e0"/>
<path d="M150.400,47.200h3l1.600,1.600v3.200l-1.600,1.400h-3z" fill="#000"/>
<path d="M151.400,48.200h1.800l0.800,1v2.400l-0.800,0.800h-1.800z" fill="#f0f000"/>
<path d="M154,50.600h3.200M154.600,52.800h1.600" stroke="#f0f000" stroke-width="0.800"/>
<path d="M151.600,42.600l7.200,7.200" stroke="#000" stroke-width="2"/>
<path d="M152.800,43.800l5.800,5.800" stroke="#f0f000" stroke-width="1.100" stroke-dasharray="1.300 0.500"/>
<circle cx="152.400" cy="43.300" r="0.900" fill="#ff0000"/>
</g>
<!-- 8 plus -->
<g>
<path d="M170.8,48.6h9.4M175.5,43.8v9.6" stroke="#808080" stroke-width="0.9"/>
<rect x="174.9" y="48" width="1.3" height="1.3" fill="#ff0000"/>
</g>
<!-- 9 cylinder -->
<g>
<rect x="193.8" y="46" width="5.2" height="6.6" fill="#808080"/>
<ellipse cx="196.4" cy="52.6" rx="2.6" ry="0.9" fill="#808080"/>
<rect x="197.4" y="46" width="1.6" height="6.6" fill="#9a9a9a"/>
<ellipse cx="196.4" cy="45.4" rx="2.9" ry="1.4" fill="#b00000"/>
</g>
<!-- 10 blue rect -->
<g>
<rect x="219" y="46.2" width="8.8" height="5" fill="#0000ff"/>
<path d="M227.8,47.4h2.4l1.4,1.4v2.4h-3.8z" fill="#fff" stroke="#000" stroke-width="0.7"/>
<path d="M219,53.3h12.8" stroke="#000" stroke-width="1.2"/>
</g>
<!-- 11 roof + M -->
<g fill="none">
<path d="M239.4,47.2l3.4,-3.4l8,3" stroke="#0000ff" stroke-width="1"/>
<path d="M241.2,52.4v-5h6.8v5M244.6,47.4v5" stroke="#a00000" stroke-width="1.4"/>
<path d="M252,49.2h-2.4v3h2.6" stroke="#0000ff" stroke-width="0.9"/>
<rect x="247" y="49" width="1.6" height="2" fill="#0000ff"/>
</g>
<!-- 12 I-beam + hand -->
<g>
<path d="M276.400,44.200c0,1.400 0.400,2 0.400,2.600v4c0,0.600 -0.400,1.200 -0.400,2.600h3.200c0,-1.400 -0.400,-2 -0.400,-2.600v-4c0,-0.600 0.400,-1.200 0.400,-2.600z" fill="#909090"/>
<rect x="272.800" y="43" width="8.800" height="1.300" fill="#000"/>
<rect x="271.200" y="53.400" width="10.400" height="1.300" fill="#000"/>
<rect x="268" y="47.800" width="1.600" height="5" fill="#20e0e0"/>
<path d="M269.600,47.200h3l1.600,1.600v3.200l-1.600,1.400h-3z" fill="#000"/>
<path d="M270.600,48.200h1.800l0.800,1v2.400l-0.800,0.800h-1.800z" fill="#f0f000"/>
<path d="M273.200,50.600h2.400M273.600,52.600h1.400" stroke="#f0f000" stroke-width="0.800"/>
<path d="M270.600,42.600l4,4" stroke="#000" stroke-width="2"/>
<path d="M271.800,43.800l5.800,5.800" stroke="#f0f000" stroke-width="1.100" stroke-dasharray="1.300 0.500"/>
<rect x="277" y="49" width="1.400" height="1.200" fill="#f0f000"/>
<circle cx="271.400" cy="43.300" r="0.900" fill="#ff0000"/>
</g>
<!-- 13 I-beam -->
<g>
<path d="M301.400,44.600c0.600,0.600 0.800,1.200 0.800,2v4c0,0.800 -0.200,1.400 -0.800,2h4.200c-0.600,-0.600 -0.800,-1.200 -0.800,-2v-4c0,-0.800 0.200,-1.400 0.800,-2z" fill="#a0a0a0" stroke="#000" stroke-width="0.900"/>
<rect x="297.800" y="43.200" width="11.100" height="1.600" fill="#000"/>
<rect x="297.800" y="52.100" width="11.100" height="1.700" fill="#000"/>
</g>
<!-- 14 deformed I-beam -->
<g transform="translate(0 0)">
<path d="M318,47.200c0.200,-1.800 1.400,-2.400 3,-2.200c2.200,0.200 3.800,-0.800 5.200,-1.800c1,-0.600 2,-0.600 2.800,0l-0.600,1.800c-1.400,-0.400 -2.600,0.400 -3.400,1.400l0.800,5.600h3.800v2.100h-11v-2.100h4.400l-0.800,-5.200c-1,-0.400 -2,-0.200 -2.600,1z" fill="#8c8c8c" stroke="#101010" stroke-width="0.800" stroke-linejoin="round"/>
<path d="M318.600,54h11" stroke="#000" stroke-width="0.900"/>
</g><rect x="323.2" y="47.6" width="1.800" height="1.800" fill="#ff2020"/>
<!-- 15 deformed I-beam pressed -->
<g transform="translate(21.4 0.2)">
<path d="M318,47.200c0.200,-1.800 1.400,-2.400 3,-2.200c2.200,0.200 3.800,-0.800 5.200,-1.800c1,-0.600 2,-0.600 2.800,0l-0.600,1.800c-1.400,-0.400 -2.600,0.400 -3.400,1.400l0.800,5.600h3.800v2.100h-11v-2.100h4.400l-0.800,-5.200c-1,-0.400 -2,-0.200 -2.600,1z" fill="#8c8c8c" stroke="#101010" stroke-width="0.800" stroke-linejoin="round"/>
<path d="M318.600,54h11" stroke="#000" stroke-width="0.900"/>
</g>
<!-- 16 yellow arrows -->
<g stroke="#000" stroke-width="0.800" stroke-linejoin="round">
<path d="M363.700,42.200v11.600" fill="none" stroke-width="1"/>
<path d="M359.800,44.400l3.900,-0.800l4.200,0.800l-0.600,2.200l-3.600,-0.600l-3.700,0.600z" fill="#f4f400"/>
<path d="M359.800,50.200l3.900,0.600l4.200,-0.600l-0.600,2.200l-3.600,0.800l-3.700,-0.800z" fill="#f4f400"/>
<path d="M362.500,43.400l1.200,-1.300l1.200,1.300M362.500,52.800l1.200,1.200l1.200,-1.200" fill="none"/>
</g>
<!-- 17 play -->
<polygon points="390.2,44 395.8,48.2 390.2,52.4" fill="#000"/>
<!-- 18 pause/stop -->
<g fill="#000">
<rect x="408.8" y="44" width="1.4" height="3.6"/><rect x="411.2" y="44" width="1.4" height="3.6"/>
<rect x="414.2" y="48.8" width="4" height="4"/>
<path d="M408.8,53.2l10,-10.2" stroke="#000" stroke-width="0.8"/>
</g>
<!-- 19 step back -->
<g fill="#000"><polygon points="433.4,44 429,48.2 433.4,52.4"/><rect x="434.6" y="44" width="3.2" height="8.4"/></g>
<!-- 20 step fwd -->
<g fill="#000"><rect x="450" y="44" width="3.2" height="8.4"/><polygon points="454.4,44 459,48.2 454.4,52.4"/></g>
<!-- spin arrows -->
<polygon points="511.2,45 513.4,42.400 515.600,45" fill="#000"/>
<polygon points="510.800,50 513.400,52.800 516,50" fill="#000"/>
<!-- combo arrow -->
<polygon points="599.8,45 605.8,45 602.8,48.4" fill="#000"/>
<!-- last button icon -->
<g>
<rect x="626.4" y="45.2" width="12.4" height="7.2" fill="#fff" stroke="#000" stroke-width="1"/>
<rect x="635.6" y="45.2" width="3.4" height="3.8" fill="#0000ff"/>
<path d="M628,48h3.4M628,50.4h6" stroke="#000" stroke-width="0.7"/>
</g>
</g>
<g id="vicons" fill="none">
<!-- cursor arrow -->
<path d="M197.600,75v9.400l2.100,-2l1.500,3.400l1.400,-0.600l-1.500,-3.400h2.900z" fill="#d4d0c8" stroke="#000" stroke-width="0.900"/>
<!-- rotate 1 -->
<g stroke="#0000ff" stroke-width="0.900">
<ellipse cx="224.400" cy="81.400" rx="2.600" ry="5.800"/>
<path d="M219.600,80.200c1,-2 8,-2.600 9,0.800c0.400,1.800 -0.800,3 -2.600,3.400"/>
<circle cx="218.600" cy="81.200" r="1.100"/>
<path d="M219.600,82.200c0.600,0.800 1.600,1.200 2.600,1.400"/>
<path d="M227.200,81.800l-0.800,2.400l2.200,0.400"/>
</g>
<!-- rotate 2 -->
<g stroke="#0000ff" stroke-width="0.900">
<path d="M241.600,78c-2.400,0.200 -4,1 -4,2.400c0,1.800 3,2.800 6.600,2.800c3.600,0 6.200,-1 6.200,-2.800c0,-1.200 -1.200,-2 -3,-2.400"/>
<path d="M241.800,83.400c-0.200,2.600 0.800,4.200 2.500,4.200c1.700,0 2.700,-1.600 2.500,-4.200"/>
<path d="M241.800,79c0,-2.600 0.900,-4 2.500,-4c1.400,0 2.200,1 2.400,2.800"/>
<path d="M245,77.200l1.800,1.400l1.400,-2"/>
<circle cx="238.600" cy="80.600" r="0.900"/>
</g>
<!-- pan red -->
<g stroke="#ff0000" stroke-width="0.9">
<path d="M264.2,76.4v-1l1.1,-1.2l1.1,1.2v1M264.2,86.6v1l1.1,1.2l1.1,-1.2v-1"/>
<path d="M264.2,75.6v3.8h-3.800M266.400,75.600v3.800h3.800M264.200,87.400v-3.800h-3.800M266.400,87.400v-3.800h3.800"/>
<path d="M260.400,79.400l-1.400,2.100l1.400,2.100M270.200,79.400l1.400,2.100l-1.400,2.100"/>
<path d="M265.300,73.400l-2.200,2.400M265.300,73.400l2.200,2.400M265.300,89.600l-2.200,-2.400M265.300,89.600l2.200,-2.400M259,81.500l2.400,-2.300M259,81.500l2.400,2.300M271.600,81.500l-2.400,-2.300M271.600,81.500l-2.400,2.300"/>
</g>
<!-- up/down anchor -->
<g stroke="#0000ff" stroke-width="1">
<path d="M284.400,76v10.600"/>
<path d="M282.200,77.600l2.200,-2.400l2.200,2.400"/>
<path d="M281.400,76.400c0.400,-1 1,-1.400 1.600,-1.600M287.400,76.400c-0.400,-1 -1,-1.400 -1.600,-1.600"/>
<path d="M280,82.600c0.400,3 2.400,4.400 4.400,4.400c2,0 4,-1.400 4.400,-4.400"/>
<path d="M279.400,84.400l0.600,-2.200l2,1M289.400,84.400l-0.600,-2.200l-2,1"/>
</g>
<!-- airplane -->
<g>
<path d="M298.400,80.600h12.400v1.800h-12.400z" fill="#0000ff"/>
<path d="M302.400,77.400h5.600" stroke="#0000ff" stroke-width="1"/>
<path d="M303.600,79.600h3.400v3.800l-1.700,1.800l-1.700,-1.800z" fill="#0000ff"/>
<path d="M309.600,79.200l1.400,1.400v2l-1.400,1.200z" fill="#0000ff"/>
<rect x="298.600" y="80.200" width="1.600" height="1.600" fill="#ff0000"/>
</g>
<!-- dot -->
<circle cx="325.300" cy="81.300" r="1.500" fill="#0000ff"/>
</g>
<g id="acticons">
<g fill="none" stroke="#909090" stroke-width="0.9" stroke-dasharray="1.2 0.8">
<rect x="15.2" y="407" width="11" height="7.6"/>
<path d="M15,405.2h11.4M15,416.6h11.4"/>
<rect x="35.6" y="407" width="11" height="7.6"/>
<path d="M35.4,405.2h11.4M35.400,416.600h11.400M38,409l6,4M44,409l-6,4"/>
</g>
<g fill="none" stroke="#fff" stroke-width="0.7" stroke-dasharray="1.2 0.8">
<path d="M16,415.4h11V407.800M36.400,415.400h11V407.800"/>
</g>
<g>
<path d="M56,407.600h4M56,410.600h3M56,413.800h4.400M62,407.600h4.600M63.400,410.600h3.400M62.400,413.800h4.400M58,407.600v6M64.600,407.600v6" fill="none" stroke="#000" stroke-width="1.100" stroke-dasharray="1.600 0.800"/>
<path d="M58.400,413.200l7.400,-6.200" stroke="#ffff00" stroke-width="1.900"/>
<path d="M57.600,413.800l1.200,-1" stroke="#000" stroke-width="1.600"/>
</g>
<path d="M82,405.600l4.600,4.800h-2.800v5.400h-3.600v-5.400h-2.800z" fill="#808080"/>
<path d="M102.300,416.800l5.200,-5.400h-3.400v-5.600h-3.600v5.600h-3.400z" fill="#808080"/>
<path d="M86.800,410.800l-2.600,0v5.200" fill="none" stroke="#fff" stroke-width="0.6"/>
<path d="M107.800,411.800l-5.200,5.400" fill="none" stroke="#fff" stroke-width="0.6"/>
</g>
<g id="grip">
<path d="M637.500,552.200l8.800,-8.800M641,552.200l5.300,-5.300M644.500,552.200l1.800,-1.800" stroke="#707070" stroke-width="1.200"/>
<path d="M636.400,552.200l9.900,-9.900M639.900,552.200l6.400,-6.400M643.400,552.200l2.900,-2.900" stroke="#fff" stroke-width="0.800"/>
</g>

</svg>
</body>
</html>
